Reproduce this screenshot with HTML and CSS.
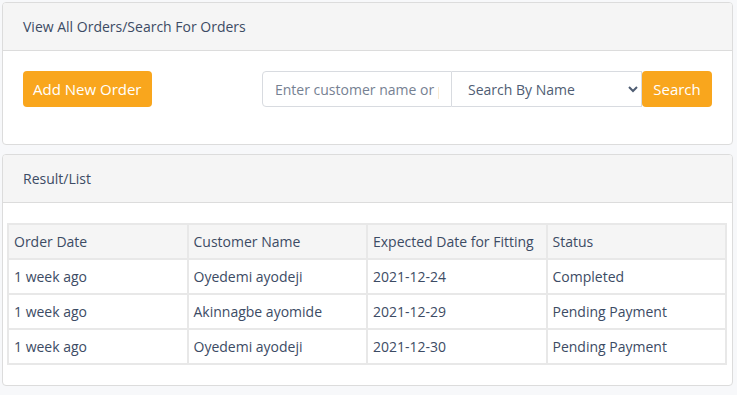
FILE: index.html
```html
<!DOCTYPE html>
<html lang="en">
<head>
    <meta charset="UTF-8">
    <meta name="viewport" content="width=device-width, initial-scale=1.0">
    <title>Orders</title>
    <link rel="stylesheet" href="styles.css">
</head>
<body>
    <div class="card">
        <div class="card-header">View All Orders/Search For Orders</div>
        <div class="card-body toolbar">
            <button type="button" class="btn">Add New Order</button>
            <form class="search-group">
                <input type="text" class="search-input" placeholder="Enter customer name or phone number">
                <select class="search-select">
                    <option>Search By Name</option>
                    <option>Search By Phone</option>
                </select>
                <button type="submit" class="btn btn-search">Search</button>
            </form>
        </div>
    </div>

    <div class="card">
        <div class="card-header">Result/List</div>
        <div class="card-body results">
            <table class="orders">
                <thead>
                    <tr>
                        <th>Order Date</th>
                        <th>Customer Name</th>
                        <th>Expected Date for Fitting</th>
                        <th>Status</th>
                    </tr>
                </thead>
                <tbody>
                    <tr>
                        <td>1 week ago</td>
                        <td>Oyedemi ayodeji</td>
                        <td>2021-12-24</td>
                        <td>Completed</td>
                    </tr>
                    <tr>
                        <td>1 week ago</td>
                        <td>Akinnagbe ayomide</td>
                        <td>2021-12-29</td>
                        <td>Pending Payment</td>
                    </tr>
                    <tr>
                        <td>1 week ago</td>
                        <td>Oyedemi ayodeji</td>
                        <td>2021-12-30</td>
                        <td>Pending Payment</td>
                    </tr>
                </tbody>
            </table>
        </div>
    </div>
</body>
</html>
```

FILE: styles.css
```css
* {
    box-sizing: border-box;
}

body {
    font-family: "Open Sans", sans-serif;
    font-size: 14px;
    color: #3c4b64;
    margin: 0;
    padding: 2px 4px 0 2px;
    background-color: #f7f8fa;
}

.card {
    background-color: #ffffff;
    border: 1px solid #dcdcdc;
    border-radius: 4px;
    margin-bottom: 9px;
    overflow: hidden;
}

.card-header {
    background-color: #f5f5f5;
    border-bottom: 1px solid #dcdcdc;
    height: 48px;
    padding: 0 20px;
    display: flex;
    align-items: center;
}

.card-body {
    padding: 20px;
}

.toolbar {
    display: flex;
    justify-content: space-between;
    align-items: flex-start;
    padding-bottom: 37px;
}

.btn {
    font-family: inherit;
    font-size: 15px;
    background-color: #f9a61d;
    color: #ffffff;
    border: none;
    border-radius: 4px;
    height: 36px;
    padding: 0 10px;
    cursor: pointer;
}

.search-group {
    display: flex;
}

.search-input,
.search-select {
    font-family: inherit;
    font-size: 14px;
    color: #4f5d73;
    height: 36px;
    border: 1px solid #d8dbe0;
    background-color: #ffffff;
}

.search-input {
    width: 190px;
    padding: 0 12px;
    border-radius: 4px 0 0 4px;
}

.search-input::placeholder {
    color: #768192;
}

.search-select {
    width: 190px;
    padding: 0 12px;
    border-left: none;
}

.btn-search {
    width: 70px;
    padding: 0;
}

.results {
    padding: 20px 5px 20px 4px;
}

.orders {
    width: 100%;
    border-collapse: collapse;
    table-layout: fixed;
}

.orders th,
.orders td {
    border: 2px solid #e8e8e8;
    text-align: left;
    font-weight: normal;
    padding: 0 5px;
    height: 35px;
}

.orders thead th {
    background-color: #f5f5f5;
}
```
